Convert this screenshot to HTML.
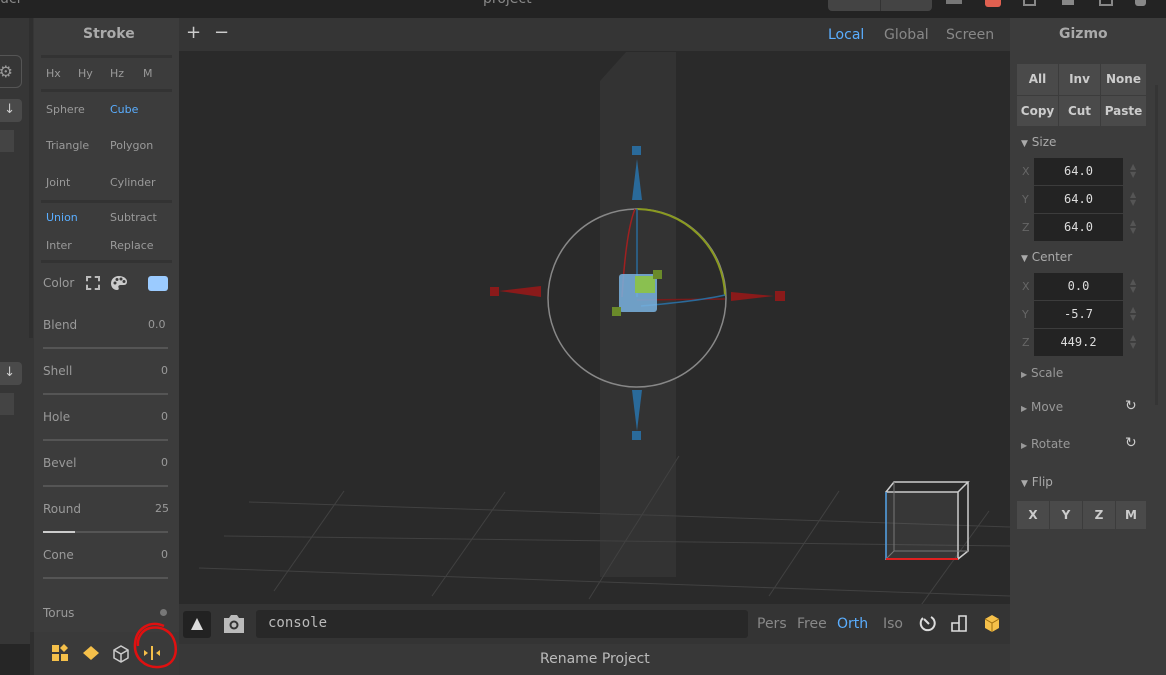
<!DOCTYPE html>
<html><head><meta charset="utf-8"><style>
*{margin:0;padding:0;box-sizing:border-box}
body{width:1166px;height:675px;overflow:hidden;background:#262626;font-family:"DejaVu Sans","Liberation Sans",sans-serif;position:relative;color:#999}
.a{position:absolute}
.t{font-size:12px;color:#9a9a9a;position:absolute;white-space:nowrap}
.blue{color:#5aaeff}
.sep{position:absolute;height:3px;background:#333}
.line{position:absolute;height:2px;background:#555}
.btn{position:absolute;background:#4a4a4a;color:#ccc;font-size:12px;text-align:center;font-weight:600}
.inp{position:absolute;background:#232323;color:#ddd;font-family:"DejaVu Sans Mono","Liberation Mono",monospace;font-size:12px;text-align:center;line-height:27px;width:89px;height:27px;left:1034px}
.ax{position:absolute;left:1022px;font-size:11px;color:#666}
.spin{position:absolute;left:1130px;width:8px;color:#555;font-size:8px;line-height:8px}
</style></head><body>
<div class="a" style="left:0;top:0;width:1166px;height:18px;background:#232323"></div>
<div class="t" style="left:483px;top:-9px;font-size:14px;color:#888">project</div>
<div class="t" style="left:0;top:-9px;font-size:14px;color:#888">ucl</div>
<div class="a" style="left:828px;top:0;width:104px;height:11px;background:#444;border-radius:0 0 4px 4px"></div>
<div class="a" style="left:880px;top:0;width:1px;height:11px;background:#333"></div>
<div class="a" style="left:946px;top:0;width:16px;height:4px;background:#777"></div>
<div class="a" style="left:985px;top:0;width:16px;height:7px;background:#e06050;border-radius:0 0 3px 3px"></div>
<div class="a" style="left:1023px;top:0;width:13px;height:6px;border:2px solid #888;border-top:none"></div>
<div class="a" style="left:1062px;top:0;width:12px;height:5px;background:#888"></div>
<div class="a" style="left:1099px;top:0;width:14px;height:6px;border:2px solid #888;border-top:none"></div>
<div class="a" style="left:1135px;top:0;width:11px;height:6px;background:#888;border-radius:0 0 3px 3px"></div>

<div class="a" style="left:0;top:18px;width:34px;height:626px;background:#363636"></div>
<div class="a" style="left:29px;top:18px;width:4px;height:320px;background:#2f2f2f"></div>
<div class="a" style="left:-10px;top:55px;width:32px;height:33px;border:1px solid #555;border-radius:6px;color:#999;font-size:16px;line-height:31px;text-align:right;padding-right:8px">⚙</div>
<div class="a" style="left:-10px;top:99px;width:32px;height:23px;background:#4a4a4a;border-radius:4px;color:#ccc;font-size:13px;line-height:22px;text-align:right;padding-right:7px">↓</div>
<div class="a" style="left:0;top:130px;width:14px;height:22px;background:#444"></div>
<div class="a" style="left:-10px;top:362px;width:32px;height:23px;background:#4a4a4a;border-radius:4px;color:#ccc;font-size:13px;line-height:22px;text-align:right;padding-right:7px">↓</div>
<div class="a" style="left:0;top:393px;width:14px;height:22px;background:#444"></div>

<div class="a" style="left:34px;top:18px;width:145px;height:626px;background:#3c3c3c"></div>
<div class="t" style="left:83px;top:26px;font-size:14px;font-weight:bold;color:#aaa">Stroke</div>
<div class="sep" style="left:41px;top:55px;width:131px"></div>
<div class="t" style="left:46px;top:67px;font-size:11px">Hx</div>
<div class="t" style="left:78px;top:67px;font-size:11px">Hy</div>
<div class="t" style="left:110px;top:67px;font-size:11px">Hz</div>
<div class="t" style="left:143px;top:67px;font-size:11px">M</div>
<div class="sep" style="left:41px;top:89px;width:131px"></div>
<div class="t" style="left:46px;top:103px;font-size:11px">Sphere</div>
<div class="t blue" style="left:110px;top:103px;font-size:11px">Cube</div>
<div class="t" style="left:46px;top:139px;font-size:11px">Triangle</div>
<div class="t" style="left:110px;top:139px;font-size:11px">Polygon</div>
<div class="t" style="left:46px;top:176px;font-size:11px">Joint</div>
<div class="t" style="left:110px;top:176px;font-size:11px">Cylinder</div>
<div class="sep" style="left:41px;top:200px;width:131px"></div>
<div class="t blue" style="left:46px;top:211px;font-size:11px">Union</div>
<div class="t" style="left:110px;top:211px;font-size:11px">Subtract</div>
<div class="t" style="left:46px;top:239px;font-size:11px">Inter</div>
<div class="t" style="left:110px;top:239px;font-size:11px">Replace</div>
<div class="sep" style="left:41px;top:260px;width:131px"></div>
<div class="t" style="left:43px;top:276px">Color</div>
<div class="a" style="left:86px;top:276px;width:14px;height:14px;border:2px dashed #bbb"></div>
<svg class="a" style="left:110px;top:275px" width="18" height="16"><path d="M9 1C4 1 1 4.5 1 8.5 1 12 3.5 15 7 15c2 0 2-1.5 1.5-2.5S8.5 10 10.5 10H14c2 0 3-1.5 3-3.5C17 3.5 13.5 1 9 1z" fill="#ccc"/><circle cx="5" cy="8" r="1.5" fill="#3c3c3c"/><circle cx="7" cy="4.5" r="1.5" fill="#3c3c3c"/><circle cx="11" cy="4" r="1.5" fill="#3c3c3c"/><circle cx="14" cy="6.5" r="1.5" fill="#3c3c3c"/></svg>
<div class="a" style="left:148px;top:276px;width:20px;height:15px;background:#9bcbff;border-radius:3px"></div>
<div class="t" style="left:43px;top:318px">Blend</div>
<div class="t" style="left:148px;top:318px;font-size:11px">0.0</div>
<div class="line" style="left:43px;top:347px;width:125px"></div>
<div class="t" style="left:43px;top:364px">Shell</div><div class="t" style="left:161px;top:364px;font-size:11px">0</div>
<div class="line" style="left:43px;top:393px;width:125px"></div>
<div class="t" style="left:43px;top:410px">Hole</div><div class="t" style="left:161px;top:410px;font-size:11px">0</div>
<div class="line" style="left:43px;top:439px;width:125px"></div>
<div class="t" style="left:43px;top:456px">Bevel</div><div class="t" style="left:161px;top:456px;font-size:11px">0</div>
<div class="line" style="left:43px;top:485px;width:125px"></div>
<div class="t" style="left:43px;top:502px">Round</div><div class="t" style="left:155px;top:502px;font-size:11px">25</div>
<div class="line" style="left:43px;top:531px;width:125px"></div>
<div class="a" style="left:43px;top:531px;width:32px;height:2px;background:#ccc"></div>
<div class="t" style="left:43px;top:548px">Cone</div><div class="t" style="left:161px;top:548px;font-size:11px">0</div>
<div class="line" style="left:43px;top:577px;width:125px"></div>
<div class="t" style="left:43px;top:606px">Torus</div>
<div class="a" style="left:160px;top:609px;width:7px;height:7px;background:#777;border-radius:50%"></div>
<div class="a" style="left:30px;top:632px;width:4px;height:43px;background:#2f2f2f"></div>
<div class="a" style="left:34px;top:632px;width:145px;height:43px;background:#3a3a3a"></div>
<svg class="a" style="left:50px;top:643px" width="125" height="22">
<rect x="2" y="2" width="7" height="7" fill="#f5c04a"/><rect x="2" y="11" width="7" height="7" fill="#f5c04a"/><rect x="11" y="11" width="7" height="7" fill="#f5c04a"/><path d="M14 1l4 4-4 4-4-4z" fill="#f5c04a"/>
<path d="M41 3l8 7-8 7-8-7z" fill="#f5c04a"/>
<path d="M71 3l7 4v8l-7 4-7-4V7z M64 7l7 4 7-4 M71 11v8" fill="none" stroke="#ccc" stroke-width="1.5"/>
<rect x="101" y="3" width="2" height="14" fill="#f5c04a"/><path d="M94 7l4 3-4 3z M110 7l-4 3 4 3z" fill="#f5c04a"/>
</svg>
<svg class="a" style="left:128px;top:618px" width="52" height="57"><path d="M36 8C22 2 8 10 7 26c-1 14 10 24 24 23 13-1 19-11 16-24C44 13 34 8 22 10 14 12 9 20 10 28" fill="none" stroke="#e01010" stroke-width="2.5"/></svg>

<div class="a" style="left:179px;top:18px;width:831px;height:33px;background:#353535"></div>
<div class="t" style="left:186px;top:22px;font-size:18px;color:#ccc">+</div>
<div class="t" style="left:214px;top:22px;font-size:18px;color:#ccc">−</div>
<div class="t blue" style="left:828px;top:27px;font-size:14px">Local</div>
<div class="t" style="left:884px;top:27px;font-size:14px;color:#888">Global</div>
<div class="t" style="left:946px;top:27px;font-size:14px;color:#888">Screen</div>
<svg class="a" style="left:179px;top:51px" width="831" height="553">
<rect width="831" height="553" fill="#2a2a2a"/>
<path d="M421 30L447 1H497V526H421Z" fill="#333"/>
<g stroke="#414141" stroke-width="1" fill="none">
<path d="M70 451L831 476"/><path d="M45 485L831 495"/><path d="M20 517L831 545"/>
<path d="M95 540L165 440"/><path d="M253 545L326 441"/><path d="M410 548L500 405"/><path d="M590 545L660 440"/><path d="M740 557L810 460"/>
</g>
<circle cx="458" cy="247" r="89" fill="none" stroke="#888" stroke-width="1.5"/>
<path d="M458 158A89 89 0 0 1 546 245" fill="none" stroke="#8a9a20" stroke-width="2"/>
<path d="M456 158Q447 180 443 246" fill="none" stroke="#a02020" stroke-width="1.5"/>
<path d="M458 158V246" stroke="#2a6a9a" stroke-width="1.5"/>
<path d="M458 249L546 248" stroke="#7a1a1a" stroke-width="1.5"/>
<path d="M462 255Q520 250 546 244" fill="none" stroke="#2a6a9a" stroke-width="1.5"/>
<rect x="453" y="95" width="9" height="9" fill="#2a6a9a"/><path d="M458 108L453 149H463Z" fill="#2a6a9a"/>
<rect x="453" y="380" width="9" height="9" fill="#2a6a9a"/><path d="M458 380L453 339H463Z" fill="#2a6a9a"/>
<rect x="311" y="236" width="9" height="9" fill="#8a1a1a"/><path d="M320 240L362 235V246Z" fill="#8a1a1a"/>
<rect x="596" y="240" width="10" height="10" fill="#8a1a1a"/><path d="M595 245L552 241V250Z" fill="#8a1a1a"/>
<rect x="440" y="223" width="38" height="38" rx="3" fill="#7ab3e0" opacity="0.85"/>
<rect x="456" y="225" width="20" height="17" fill="#8ac050"/>
<rect x="474" y="219" width="9" height="9" fill="#6a8a2a"/>
<rect x="433" y="256" width="9" height="9" fill="#6a8a2a"/>
<rect x="707" y="441" width="72" height="67" fill="#888" opacity="0.15"/>
<g fill="none" stroke="#ccc" stroke-width="1.5">
<path d="M707 441V508H779V441ZM707 441L715 431H789L779 441M789 431V500L779 508"/>
</g>
<path d="M715 431V500L707 508M715 500H789" fill="none" stroke="#777" stroke-width="1"/>
<path d="M707 441V508" stroke="#3a8ad0" stroke-width="1.5"/>
<path d="M707 508H779" stroke="#e02020" stroke-width="2"/>
</svg>

<div class="a" style="left:179px;top:604px;width:831px;height:40px;background:#343434"></div>
<div class="a" style="left:183px;top:611px;width:28px;height:27px;background:#222;border-radius:3px"></div>
<svg class="a" style="left:189px;top:616px" width="16" height="16"><path d="M8 2L14 14H2Z" fill="#ddd"/></svg>
<svg class="a" style="left:222px;top:613px" width="24" height="22"><path d="M2 5h5l2-3h6l2 3h5v15H2Z" fill="#bbb"/><circle cx="12" cy="12" r="4.5" fill="#343434"/><circle cx="12" cy="12" r="2.5" fill="#bbb"/></svg>
<div class="a" style="left:256px;top:610px;width:492px;height:28px;background:#282828;border-radius:3px"></div>
<div class="t" style="left:268px;top:615px;font-family:'DejaVu Sans Mono','Liberation Mono',monospace;font-size:14px;color:#bbb">console</div>
<div class="t" style="left:757px;top:616px;font-size:14px;color:#888">Pers</div>
<div class="t" style="left:797px;top:616px;font-size:14px;color:#888">Free</div>
<div class="t blue" style="left:837px;top:616px;font-size:14px">Orth</div>
<div class="t" style="left:883px;top:616px;font-size:14px;color:#888">Iso</div>
<svg class="a" style="left:918px;top:613px" width="90" height="22">
<path d="M5 5A7 7 0 1 0 13 4" fill="none" stroke="#ddd" stroke-width="2"/><path d="M6 6l5 5" stroke="#ddd" stroke-width="2"/>
<path d="M34 10h7v-7h7v15h-14z M41 10v8" fill="none" stroke="#ddd" stroke-width="1.6"/>
<path d="M74 2l7 4v9l-7 4-7-4V6z" fill="#f5c04a"/><path d="M67 6l7 4 7-4M74 10v9" fill="none" stroke="#a07010" stroke-width="1"/>
</svg>
<div class="a" style="left:179px;top:644px;width:831px;height:31px;background:#383838"></div>
<div class="t" style="left:540px;top:651px;font-size:14px;color:#bbb">Rename Project</div>

<div class="a" style="left:1010px;top:18px;width:156px;height:657px;background:#3c3c3c"></div>
<div class="a" style="left:1155px;top:85px;width:3px;height:320px;background:#353535"></div>
<div class="t" style="left:1059px;top:26px;font-size:14px;font-weight:bold;color:#aaa">Gizmo</div>
<div class="btn" style="left:1017px;top:64px;width:41px;height:31px;line-height:31px">All</div>
<div class="btn" style="left:1059px;top:64px;width:41px;height:31px;line-height:31px">Inv</div>
<div class="btn" style="left:1101px;top:64px;width:45px;height:31px;line-height:31px">None</div>
<div class="btn" style="left:1017px;top:96px;width:41px;height:30px;line-height:30px">Copy</div>
<div class="btn" style="left:1059px;top:96px;width:41px;height:30px;line-height:30px">Cut</div>
<div class="btn" style="left:1101px;top:96px;width:45px;height:30px;line-height:30px">Paste</div>
<div class="t" style="left:1021px;top:135px;color:#aaa"><span style="font-size:9px">▼</span> Size</div>
<div class="ax" style="top:165px">X</div><div class="inp" style="top:158px">64.0</div><div class="spin" style="top:163px">▲<br>▼</div>
<div class="ax" style="top:193px">Y</div><div class="inp" style="top:186px">64.0</div><div class="spin" style="top:191px">▲<br>▼</div>
<div class="ax" style="top:221px">Z</div><div class="inp" style="top:214px">64.0</div><div class="spin" style="top:219px">▲<br>▼</div>
<div class="t" style="left:1021px;top:250px;color:#aaa"><span style="font-size:9px">▼</span> Center</div>
<div class="ax" style="top:280px">X</div><div class="inp" style="top:273px">0.0</div><div class="spin" style="top:278px">▲<br>▼</div>
<div class="ax" style="top:308px">Y</div><div class="inp" style="top:301px">-5.7</div><div class="spin" style="top:306px">▲<br>▼</div>
<div class="ax" style="top:336px">Z</div><div class="inp" style="top:329px">449.2</div><div class="spin" style="top:334px">▲<br>▼</div>
<div class="t" style="left:1021px;top:366px;color:#999"><span style="font-size:8px">▶</span> Scale</div>
<div class="t" style="left:1021px;top:400px;color:#999"><span style="font-size:8px">▶</span> Move</div>
<div class="t" style="left:1125px;top:398px;font-size:14px;color:#ccc">↻</div>
<div class="t" style="left:1021px;top:437px;color:#999"><span style="font-size:8px">▶</span> Rotate</div>
<div class="t" style="left:1125px;top:435px;font-size:14px;color:#ccc">↻</div>
<div class="t" style="left:1021px;top:475px;color:#aaa"><span style="font-size:9px">▼</span> Flip</div>
<div class="btn" style="left:1017px;top:501px;width:32px;height:28px;line-height:28px">X</div>
<div class="btn" style="left:1050px;top:501px;width:32px;height:28px;line-height:28px">Y</div>
<div class="btn" style="left:1083px;top:501px;width:32px;height:28px;line-height:28px">Z</div>
<div class="btn" style="left:1116px;top:501px;width:30px;height:28px;line-height:28px">M</div>
</body></html>
